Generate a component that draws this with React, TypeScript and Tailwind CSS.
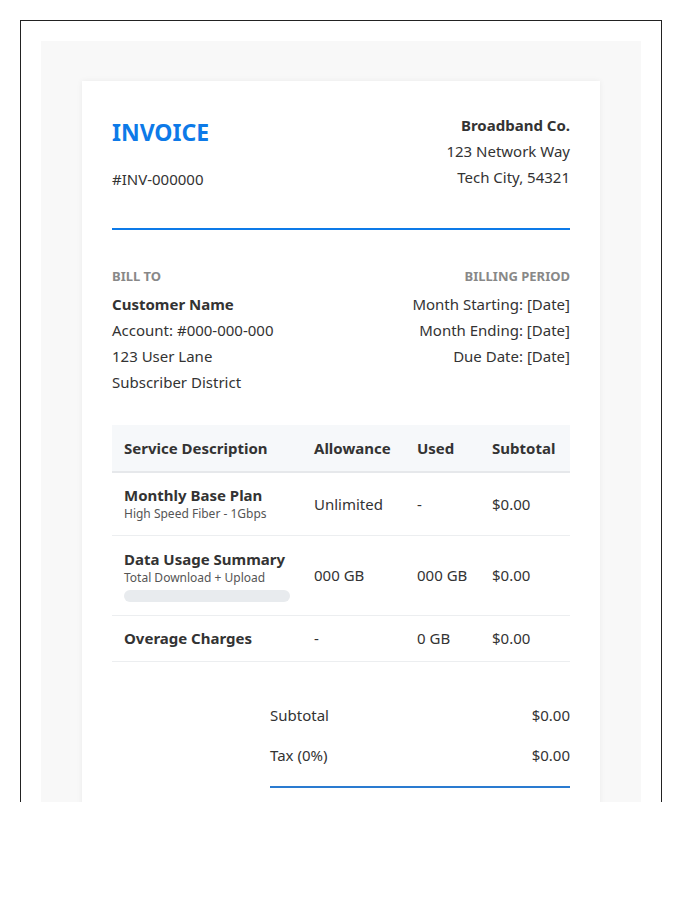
export default function App() {
  return (
    <div className="bg-white w-[700px] h-[900px] pt-5 pl-5" style={{ fontFamily: '"Noto Sans", "Open Sans", sans-serif' }}>
      <div className="w-[642px] h-[782px] overflow-hidden border border-b-0 border-[#222] p-5">
        <div className="bg-[#f8f8f8] px-[41px] pt-10 pb-10">
          <div className="bg-white px-[30px] pt-[30px] pb-10 shadow-[0_0_6px_rgba(0,0,0,0.06)] text-[15px] text-[#333]">
            <div className="flex justify-between">
              <div>
                <h1 className="text-[23px] font-bold text-[#0d7ae8] leading-[42px]">INVOICE</h1>
                <p className="mt-[13px] leading-[26px]">#INV-000000</p>
              </div>
              <div className="text-right leading-[26px] pt-[1px]">
                <p className="font-bold">Broadband Co.</p>
                <p>123 Network Way</p>
                <p>Tech City, 54321</p>
              </div>
            </div>
            <div className="mt-[36px] h-[2px] bg-[#0d7ae8]" />

            <div className="mt-[36px] flex justify-between leading-[26px]">
              <div>
                <p className="text-[13px] font-bold text-[#888] uppercase leading-[20px] mb-[5px]">Bill To</p>
                <p className="font-bold">Customer Name</p>
                <p>Account: #000-000-000</p>
                <p>123 User Lane</p>
                <p>Subscriber District</p>
              </div>
              <div className="text-right">
                <p className="text-[13px] font-bold text-[#888] uppercase leading-[20px] mb-[5px]">Billing Period</p>
                <p>Month Starting: [Date]</p>
                <p>Month Ending: [Date]</p>
                <p>Due Date: [Date]</p>
              </div>
            </div>

            <table className="mt-[30px] w-full border-collapse text-left">
              <thead>
                <tr className="bg-[#f6f8fa] border-b-2 border-[#e6e8eb] h-[47px]">
                  <th className="px-3 w-[190px]">Service Description</th>
                  <th className="px-[12px] w-[103px]">Allowance</th>
                  <th className="px-3 w-[75px]">Used</th>
                  <th className="px-3">Subtotal</th>
                </tr>
              </thead>
              <tbody>
                <tr className="border-b border-[#eceef0] h-[63px]">
                  <td className="px-3">
                    <p className="font-bold leading-[20px]">Monthly Base Plan</p>
                    <p className="text-[12px] text-[#555] leading-[17px]">High Speed Fiber - 1Gbps</p>
                  </td>
                  <td className="px-3">Unlimited</td>
                  <td className="px-3">-</td>
                  <td className="px-3">$0.00</td>
                </tr>
                <tr className="border-b border-[#eceef0] h-[80px]">
                  <td className="px-3">
                    <p className="font-bold leading-[20px]">Data Usage Summary</p>
                    <p className="text-[12px] text-[#555] leading-[17px]">Total Download + Upload</p>
                    <div className="mt-[4px] h-3 rounded-md bg-[#e8ebee]" />
                  </td>
                  <td className="px-3">000 GB</td>
                  <td className="px-3">000 GB</td>
                  <td className="px-3">$0.00</td>
                </tr>
                <tr className="border-b border-[#eceef0] h-[46px]">
                  <td className="px-3 font-bold">Overage Charges</td>
                  <td className="px-3">-</td>
                  <td className="px-3">0 GB</td>
                  <td className="px-3">$0.00</td>
                </tr>
              </tbody>
            </table>

            <div className="mt-[40px] ml-auto w-[300px]">
              <div className="flex justify-between leading-[26px]"><span>Subtotal</span><span>$0.00</span></div>
              <div className="mt-[14px] flex justify-between leading-[26px]"><span>Tax (0%)</span><span>$0.00</span></div>
              <div className="mt-[18px] h-[2px] bg-[#2a7bd0]" />
              <div className="mt-[14px] flex justify-between text-[18px] font-bold leading-[26px]"><span>Total</span><span>$0.00</span></div>
            </div>
          </div>
        </div>
      </div>
    </div>
  )
}
